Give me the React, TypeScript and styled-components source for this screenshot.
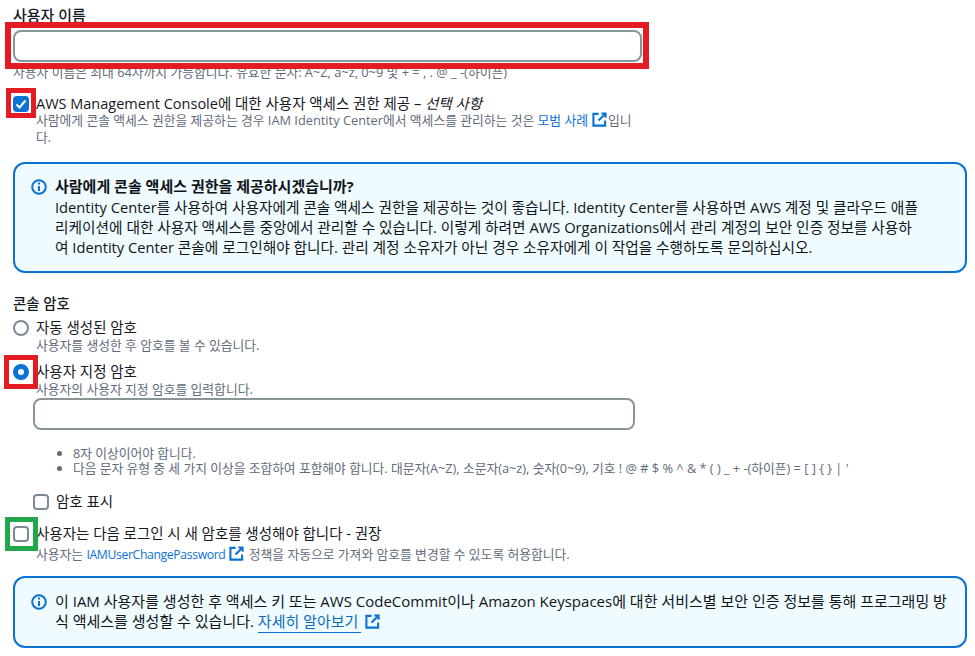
import * as React from 'react';
import styled, { createGlobalStyle } from 'styled-components';

const GlobalStyle = createGlobalStyle`
    html, body {
        margin: 0;
        padding: 0;
        background: #ffffff;
    }
    body {
        width: 975px;
        height: 656px;
        overflow: hidden;
        font-family: "Open Sans", "Noto Sans CJK KR", sans-serif;
        color: #16191f;
    }
`;

const Page = styled.div`
    position: relative;
    width: 975px;
    height: 656px;
    padding: 6px 8px 0 13px;
    box-sizing: border-box;
    display: flex;
    flex-direction: column;
`;

const FieldLabel = styled.div`
    font-size: 15px;
    font-weight: 500;
    line-height: 18px;
    height: 18px;
`;

const TextBox = styled.div<{ $width: number; $height: number; $top: number; $left?: number }>`
    width: ${(p) => p.$width}px;
    height: ${(p) => p.$height}px;
    margin-top: ${(p) => p.$top}px;
    margin-left: ${(p) => p.$left ?? 0}px;
    box-sizing: border-box;
    border: 2px solid #879596;
    border-radius: 8px;
    background: #fff;
    flex: none;
`;

const Hint = styled.div<{ $top?: number }>`
    margin-top: ${(p) => p.$top ?? 0}px;
    font-size: 12.8px;
    line-height: 17px;
    color: #5f6b7a;
`;

const OptionRow = styled.div<{ $top: number; $left?: number; $width?: number }>`
    display: flex;
    gap: 7px;
    margin-top: ${(p) => p.$top}px;
    margin-left: ${(p) => p.$left ?? 0}px;
    width: ${(p) => (p.$width ? `${p.$width}px` : 'auto')};
`;

const OptionBody = styled.div`
    display: flex;
    flex-direction: column;
`;

const OptionTitle = styled.div`
    font-size: 14.5px;
    line-height: 18px;
`;

const CheckBox = styled.span<{ $checked?: boolean }>`
    flex: none;
    width: 16px;
    height: 16px;
    margin-top: 1px;
    box-sizing: border-box;
    border-radius: 4px;
    border: 2px solid ${(p) => (p.$checked ? '#0972d3' : '#7d8998')};
    background: ${(p) => (p.$checked ? '#0972d3' : '#fff')};
    display: flex;
    align-items: center;
    justify-content: center;
`;

const Radio = styled.span<{ $checked?: boolean }>`
    flex: none;
    width: 16px;
    height: 16px;
    margin-top: 1px;
    box-sizing: border-box;
    border-radius: 50%;
    border: ${(p) => (p.$checked ? '5px solid #0972d3' : '2px solid #7d8998')};
    background: #fff;
`;

const InfoBox = styled.div<{ $top: number; $height: number; $right: number; $pad: number }>`
    width: 954px;
    height: ${(p) => p.$height}px;
    margin-top: ${(p) => p.$top}px;
    box-sizing: border-box;
    flex: none;
    border: 2px solid #0972d3;
    border-radius: 12px;
    background: #f0fbff;
    padding: ${(p) => p.$pad}px ${(p) => p.$right}px 0 16px;
    display: flex;
    gap: 8px;
`;

const InfoText = styled.div<{ $size: number }>`
    font-size: ${(p) => p.$size}px;
    line-height: 20px;
    color: #0f141a;
`;

const InfoTitle = styled.div`
    font-size: 15px;
    font-weight: 700;
    margin-bottom: 1px;
`;

const SectionLabel = styled.div`
    font-size: 14.4px;
    font-weight: 500;
    line-height: 18px;
    margin-top: 22px;
`;

const Rules = styled.ul`
    margin: 16px 0 0 0;
    padding: 0 0 0 60px;
    font-size: 12.76px;
    line-height: 15px;
    color: #5f6b7a;
`;

const A = styled.a`
    color: #0972d3;
    text-decoration: none;
`;

const PolicyLink = styled(A)`
    font-size: 12.2px;
    letter-spacing: -0.35px;
`;

const UnderlinedLink = styled(A)`
    border-bottom: 1px solid #0972d3;
    padding: 0 3px 1px 0;
    color: #0b6bb8;
`;

const Highlight = styled.div<{ $x: number; $y: number; $w: number; $h: number; $color: string; $size: number }>`
    position: absolute;
    left: ${(p) => p.$x}px;
    top: ${(p) => p.$y}px;
    width: ${(p) => p.$w}px;
    height: ${(p) => p.$h}px;
    box-sizing: border-box;
    border: ${(p) => p.$size}px solid ${(p) => p.$color};
    pointer-events: none;
`;

const ExternalIcon = ({ size = 15 }: { size?: number }) => (
    <svg
        width={size}
        height={size}
        viewBox="0 0 16 16"
        fill="none"
        stroke="#0972d3"
        strokeWidth="2.2"
        style={{ verticalAlign: '-2px', margin: '0 1px 0 4px' }}
    >
        <path d="M14 9v5.5H1.5V2H7" />
        <path d="M10 1.5h4.5V6" />
        <path d="M14.5 1.5L7 9" />
    </svg>
);

const InfoIcon = () => (
    <svg width="16" height="16" viewBox="0 0 16 16" fill="none" stroke="#0972d3" strokeWidth="2" style={{ flex: 'none', marginTop: 3 }}>
        <circle cx="8" cy="8" r="6.8" />
        <path d="M8 7v5" />
        <path d="M8 3.6v2" />
    </svg>
);

const App: React.FunctionComponent = () => {
    return (
        <Page>
            <GlobalStyle />
            <FieldLabel>사용자 이름</FieldLabel>
            <TextBox $width={629} $height={32} $top={6} />
            <Hint $top={2}>사용자 이름은 최대 64자까지 가능합니다. 유효한 문자: A~Z, a~z, 0~9 및 + = , . @ _ -(하이픈)</Hint>

            <OptionRow $top={14} $width={625}>
                <CheckBox $checked>
                    <svg width="12" height="12" viewBox="0 0 12 12" fill="none" stroke="#fff" strokeWidth="2">
                        <path d="M1.5 6.5L4.5 9.5L10.5 2.5" />
                    </svg>
                </CheckBox>
                <OptionBody>
                    <OptionTitle>AWS Management Console에 대한 사용자 액세스 권한 제공 – <i>선택 사항</i></OptionTitle>
                    <Hint $top={-1}>사람에게 콘솔 액세스 권한을 제공하는 경우 IAM Identity Center에서 액세스를 관리하는 것은 <A>모범 사례<ExternalIcon /></A>입니다.</Hint>
                </OptionBody>
            </OptionRow>

            <InfoBox $top={16} $height={111} $right={44} $pad={12}>
                <InfoIcon />
                <InfoText $size={14.7}>
                    <InfoTitle>사람에게 콘솔 액세스 권한을 제공하시겠습니까?</InfoTitle>
                    Identity Center를 사용하여 사용자에게 콘솔 액세스 권한을 제공하는 것이 좋습니다. Identity Center를 사용하면 AWS 계정 및 클라우드 애플리케이션에 대한 사용자 액세스를 중앙에서 관리할 수 있습니다. 이렇게 하려면 AWS Organizations에서 관리 계정의 보안 인증 정보를 사용하여 Identity Center 콘솔에 로그인해야 합니다. 관리 계정 소유자가 아닌 경우 소유자에게 이 작업을 수행하도록 문의하십시오.
                </InfoText>
            </InfoBox>

            <SectionLabel>콘솔 암호</SectionLabel>
            <OptionRow $top={6}>
                <Radio />
                <OptionBody>
                    <OptionTitle>자동 생성된 암호</OptionTitle>
                    <Hint>사용자를 생성한 후 암호를 볼 수 있습니다.</Hint>
                </OptionBody>
            </OptionRow>
            <OptionRow $top={9}>
                <Radio $checked />
                <OptionBody>
                    <OptionTitle>사용자 지정 암호</OptionTitle>
                    <Hint>사용자의 사용자 지정 암호를 입력합니다.</Hint>
                </OptionBody>
            </OptionRow>
            <TextBox $width={602} $height={32} $top={0} $left={20} />
            <Rules>
                <li>8자 이상이어야 합니다.</li>
                <li>다음 문자 유형 중 세 가지 이상을 조합하여 포함해야 합니다. 대문자(A~Z), 소문자(a~z), 숫자(0~9), 기호 ! @ # $ % ^ &amp; * ( ) _ + -(하이픈) = [ ] {'{ }'} | '</li>
            </Rules>
            <OptionRow $top={17} $left={20}>
                <CheckBox />
                <OptionTitle>암호 표시</OptionTitle>
            </OptionRow>
            <OptionRow $top={14}>
                <CheckBox />
                <OptionBody>
                    <OptionTitle>사용자는 다음 로그인 시 새 암호를 생성해야 합니다 - 권장</OptionTitle>
                    <Hint $top={3}>사용자는 <PolicyLink>IAMUserChangePassword<ExternalIcon /></PolicyLink> 정책을 자동으로 가져와 암호를 변경할 수 있도록 허용합니다.</Hint>
                </OptionBody>
            </OptionRow>
            <InfoBox $top={13} $height={72} $right={18} $pad={13}>
                <InfoIcon />
                <InfoText $size={15}>
                    이 IAM 사용자를 생성한 후 액세스 키 또는 AWS CodeCommit이나 Amazon Keyspaces에 대한 서비스별 보안 인증 정보를 통해 프로그래밍 방식 액세스를 생성할 수 있습니다. <UnderlinedLink>자세히 알아보기</UnderlinedLink><ExternalIcon />
                </InfoText>
            </InfoBox>

            <Highlight $x={5} $y={22} $w={644} $h={47} $color="#e31b23" $size={6} />
            <Highlight $x={6} $y={88} $w={30} $h={30} $color="#e31b23" $size={5} />
            <Highlight $x={4} $y={355} $w={34} $h={34} $color="#e31b23" $size={5} />
            <Highlight $x={5} $y={517} $w={33} $h={34} $color="#22a84a" $size={5} />
        </Page>
    );
};

export default App;
